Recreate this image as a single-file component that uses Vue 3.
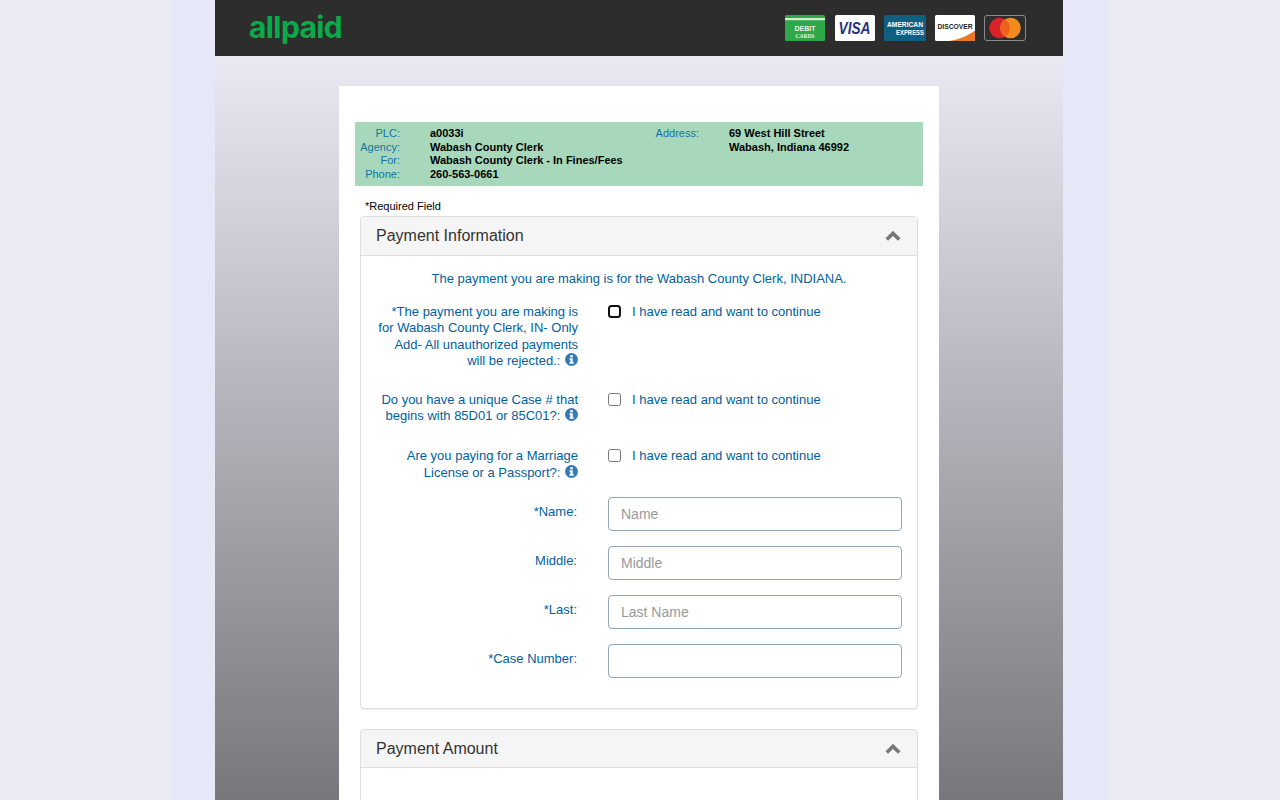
<template>
  <div class="page">
    <header class="topbar">
      <div class="logo">allpaid</div>
      <div class="cards">
        <svg class="card" width="41" height="26" viewBox="0 0 41 26">
          <rect width="40" height="26" rx="1.5" fill="#2fa84a" />
          <rect y="3" width="40" height="2.2" fill="#d3ecd2" />
          <text x="20" y="16" class="debit-a" text-anchor="middle">DEBIT</text>
          <text x="20" y="23" class="debit-b" text-anchor="middle">CARDS</text>
        </svg>
        <svg class="card" width="40" height="26" viewBox="0 0 40 26">
          <rect width="40" height="26" rx="1.5" fill="#fff" />
          <text x="19.5" y="19" class="visa" text-anchor="middle" textLength="32" lengthAdjust="spacingAndGlyphs">VISA</text>
        </svg>
        <svg class="card" width="42" height="26" viewBox="0 0 42 26">
          <rect width="42" height="26" rx="1.5" fill="#105f7e" />
          <text x="21" y="12" class="amex" text-anchor="middle" textLength="36" lengthAdjust="spacingAndGlyphs">AMERICAN</text>
          <text x="26" y="20" class="amex" text-anchor="middle" textLength="28" lengthAdjust="spacingAndGlyphs">EXPRESS</text>
        </svg>
        <svg class="card" width="40" height="26" viewBox="0 0 40 26">
          <rect width="40" height="26" rx="1.5" fill="#fff" />
          <path d="M14 26 C26 24 34 20 40 15.5 V24.5 Q40 26 38.5 26 Z" fill="#e9772a" />
          <text x="20" y="14" class="discover" text-anchor="middle" textLength="35" lengthAdjust="spacingAndGlyphs">DISCOVER</text>
        </svg>
        <svg class="card" width="42" height="26" viewBox="0 0 42 26">
          <rect x="0.5" y="0.5" width="41" height="25" rx="2.5" fill="#2d2d2d" stroke="#8a8a8a" />
          <circle cx="15.5" cy="13" r="10.3" fill="#d8232a" />
          <circle cx="26.5" cy="13" r="10.3" fill="#f58a1f" />
          <path d="M21 4.3 a10.3 10.3 0 0 1 0 17.4 a10.3 10.3 0 0 1 0 -17.4 Z" fill="#f0601f" />
        </svg>
      </div>
    </header>

    <main class="content">
      <div class="sheet">
        <section class="agency">
          <div class="agency-col left">
            <template v-for="row in agencyLeft" :key="row.label">
              <span class="agency-label">{{ row.label }}</span>
              <span class="agency-value">{{ row.value }}</span>
            </template>
          </div>
          <div class="agency-col right">
            <span class="agency-label">Address:</span>
            <span class="agency-value">69 West Hill Street</span>
            <span class="agency-label"></span>
            <span class="agency-value">Wabash, Indiana 46992</span>
          </div>
        </section>

        <p class="required">*Required Field</p>

        <section class="panel">
          <div class="panel-head">
            <h2>Payment Information</h2>
            <svg class="chevron" width="16" height="12" viewBox="0 0 16 12">
              <path d="M1.8 9.6 L8 3.4 L14.2 9.6" fill="none" stroke="#777" stroke-width="3.6" />
            </svg>
          </div>
          <div class="panel-body">
            <p class="intro">The payment you are making is for the Wabash County Clerk, INDIANA.</p>

            <div v-for="(q, i) in questions" :key="i" class="form-row check-row">
              <div class="form-label">
                {{ q }}
                <svg class="info" width="13" height="13" viewBox="0 0 13 13">
                  <circle cx="6.5" cy="6.5" r="6.5" fill="#337ab7" />
                  <rect x="5.2" y="2.2" width="2.6" height="2.1" fill="#fff" />
                  <path d="M4.5 5.3 H7.8 V9.3 H8.7 V10.8 H4.5 V9.3 H5.3 V6.7 H4.5 Z" fill="#fff" />
                </svg>
              </div>
              <label class="check" :class="{ focused: i === 0 }">
                <input type="checkbox" />
                <span>I have read and want to continue</span>
              </label>
            </div>

            <div v-for="f in fields" :key="f.label" class="form-row input-row">
              <div class="form-label">{{ f.label }}</div>
              <input class="text-input" type="text" :placeholder="f.placeholder" />
            </div>
          </div>
        </section>

        <section class="panel second">
          <div class="panel-head">
            <h2>Payment Amount</h2>
            <svg class="chevron" width="16" height="12" viewBox="0 0 16 12">
              <path d="M1.8 9.6 L8 3.4 L14.2 9.6" fill="none" stroke="#777" stroke-width="3.6" />
            </svg>
          </div>
          <div class="panel-body empty"></div>
        </section>
      </div>
    </main>
  </div>
</template>

<script setup>
const agencyLeft = [
  { label: 'PLC:', value: 'a0033i' },
  { label: 'Agency:', value: 'Wabash County Clerk' },
  { label: 'For:', value: 'Wabash County Clerk - In Fines/Fees' },
  { label: 'Phone:', value: '260-563-0661' }
];

const questions = [
  '*The payment you are making is for Wabash County Clerk, IN- Only Add- All unauthorized payments will be rejected.:',
  'Do you have a unique Case # that begins with 85D01 or 85C01?:',
  'Are you paying for a Marriage License or a Passport?:'
];

const fields = [
  { label: '*Name:', placeholder: 'Name' },
  { label: 'Middle:', placeholder: 'Middle' },
  { label: '*Last:', placeholder: 'Last Name' },
  { label: '*Case Number:', placeholder: '' }
];
</script>

<style>
html,
body {
  margin: 0;
  height: 800px;
  overflow: hidden;
  background: linear-gradient(to right, #e9eaf3 0, #e9eaf3 170px, #e6e8f8 170px, #e6e8f8 1110px, #e9ebf0 1110px, #e9ebf0 1116px, #eaeaf4 1116px);
}
</style>

<style scoped>
.page {
  width: 848px;
  height: 800px;
  margin-left: 215px;
  overflow: hidden;
  font-family: "Liberation Sans", Arial, sans-serif;
}

.topbar {
  height: 56px;
  background-color: #2d2d2d;
  display: flex;
  justify-content: space-between;
  align-items: center;
  padding: 0 37px 0 34px;
}

.logo {
  font-family: Inter, sans-serif;
  font-weight: 700;
  font-size: 30px;
  letter-spacing: -0.6px;
  line-height: 30px;
  color: #0aa94a;
  margin-top: -3px;
}

.cards {
  display: flex;
  align-items: center;
  gap: 9px;
}

.card {
  display: block;
}

.debit-a {
  font: 700 7px "Liberation Sans", sans-serif;
  fill: #e8f6e8;
}

.debit-b {
  font: 700 5.5px "Liberation Serif", serif;
  fill: #e8f6e8;
}

.visa {
  font: italic 700 16px "Liberation Sans", sans-serif;
  fill: #27347f;
}

.amex {
  font: 700 6.5px "Liberation Sans", sans-serif;
  fill: #fff;
}

.discover {
  font: 700 6.8px "Liberation Sans", sans-serif;
  fill: #222;
}

.content {
  height: 744px;
  padding-top: 30px;
  box-sizing: border-box;
  background: linear-gradient(to bottom, #e8e9f3, #77787b);
}

.sheet {
  width: 600px;
  height: 714px;
  margin: 0 auto;
  padding: 36px 16px 0;
  box-sizing: border-box;
  background: #fff;
  overflow: hidden;
}

.agency {
  height: 64px;
  background-color: #a8d8bb;
  display: flex;
  padding-top: 5px;
  box-sizing: border-box;
  font-size: 11px;
  line-height: 13.5px;
}

.agency-col {
  display: grid;
  align-content: start;
  column-gap: 30px;
}

.agency-col.left {
  width: 300px;
  grid-template-columns: 45px 1fr;
}

.agency-col.right {
  grid-template-columns: 44px 1fr;
}

.agency-label {
  color: #1273a8;
  text-align: right;
}

.agency-value {
  color: #000;
  font-weight: 700;
  white-space: nowrap;
}

.required {
  margin: 14px 0 0 10px;
  font-size: 11px;
  line-height: 13px;
  color: #000;
}

.panel {
  width: 558px;
  margin: 3px 0 0 5px;
  border: 1px solid #ddd;
  border-radius: 4px;
  box-sizing: border-box;
  background: #fff;
  box-shadow: 0 1px 1px rgba(0, 0, 0, 0.05);
}

.panel.second {
  margin-top: 20px;
}

.panel.second .panel-head {
  height: 38px;
}

.panel-head {
  height: 39px;
  box-sizing: border-box;
  padding: 0 15px;
  background-color: #f5f5f5;
  border-bottom: 1px solid #ddd;
  border-radius: 3px 3px 0 0;
  display: flex;
  justify-content: space-between;
  align-items: center;
}

.panel-head h2 {
  margin: 0;
  font-size: 16px;
  font-weight: 400;
  color: #333;
}

.chevron {
  display: block;
  margin-right: 1px;
}

.panel-body {
  padding: 15px 0 30px;
  color: #005f9e;
  font-size: 13px;
}

.panel-body.empty {
  height: 60px;
}

.intro {
  margin: 0 0 10px;
  text-align: center;
  line-height: 16px;
}

.form-row {
  display: grid;
  grid-template-columns: 217px 294px;
  column-gap: 30px;
}

.check-row {
  padding-top: 7px;
  margin-bottom: 16px;
}

.check-row:nth-of-type(1) {
  margin-bottom: 15px;
}

.check-row:nth-of-type(2) {
  margin-bottom: 17px;
}

.input-row {
  margin-bottom: 15px;
}

.input-row:last-child {
  margin-bottom: 0;
}

.form-label {
  padding-left: 15px;
  text-align: right;
  line-height: 16.4px;
}

.input-row .form-label {
  padding-top: 7px;
  padding-right: 1px;
}

.info {
  vertical-align: -1px;
  margin-left: 1px;
}

.check {
  display: flex;
  align-items: flex-start;
  gap: 11px;
  line-height: 16px;
}

.check input {
  width: 13px;
  height: 13px;
  margin: 1px 0 0;
}

.check.focused input {
  appearance: none;
  box-sizing: border-box;
  border: 2px solid #111;
  border-radius: 3.5px;
  background: #fff;
}

.text-input {
  height: 34px;
  width: 294px;
  box-sizing: border-box;
  padding: 6px 12px;
  border: 1px solid #8ea4b8;
  border-radius: 4px;
  font: 14px "Liberation Sans", Arial, sans-serif;
  color: #555;
  background: #fff;
}

.text-input::placeholder {
  color: #999;
  opacity: 1;
}
</style>
